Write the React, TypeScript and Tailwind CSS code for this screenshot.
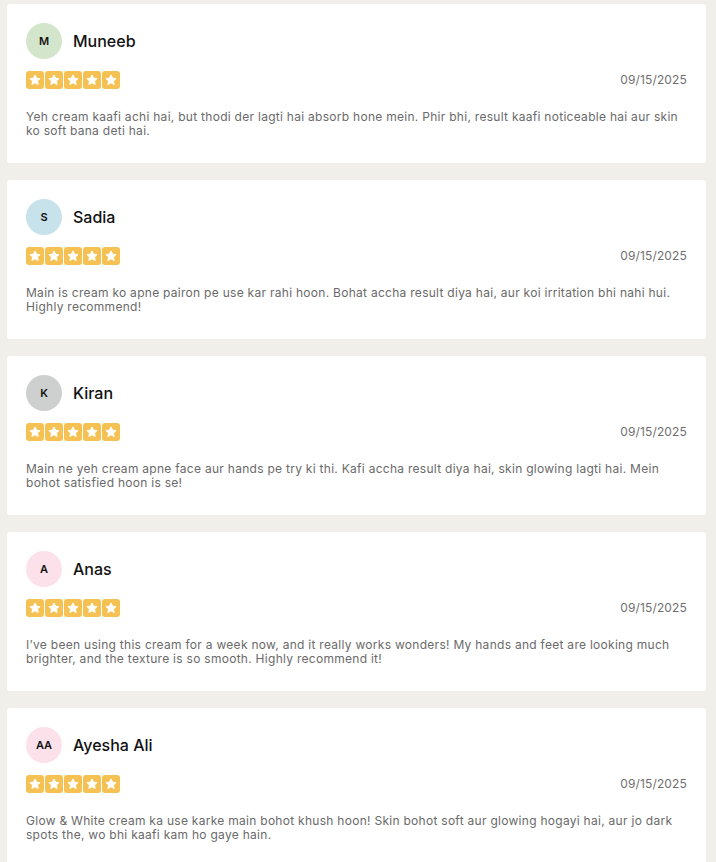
import React from 'react';

interface Review {
  initials: string;
  name: string;
  avatar: string;
  date: string;
  text: string;
}

const REVIEWS: Review[] = [
  {
    initials: 'M',
    name: 'Muneeb',
    avatar: 'bg-[#d3e6cb]',
    date: '09/15/2025',
    text: 'Yeh cream kaafi achi hai, but thodi der lagti hai absorb hone mein. Phir bhi, result kaafi noticeable hai aur skin ko soft bana deti hai.',
  },
  {
    initials: 'S',
    name: 'Sadia',
    avatar: 'bg-[#c7e2eb]',
    date: '09/15/2025',
    text: 'Main is cream ko apne pairon pe use kar rahi hoon. Bohat accha result diya hai, aur koi irritation bhi nahi hui. Highly recommend!',
  },
  {
    initials: 'K',
    name: 'Kiran',
    avatar: 'bg-[#cdd0cf]',
    date: '09/15/2025',
    text: 'Main ne yeh cream apne face aur hands pe try ki thi. Kafi accha result diya hai, skin glowing lagti hai. Mein bohot satisfied hoon is se!',
  },
  {
    initials: 'A',
    name: 'Anas',
    avatar: 'bg-[#fce1ea]',
    date: '09/15/2025',
    text: 'I\u2019ve been using this cream for a week now, and it really works wonders! My hands and feet are looking much brighter, and the texture is so smooth. Highly recommend it!',
  },
  {
    initials: 'AA',
    name: 'Ayesha Ali',
    avatar: 'bg-[#fce1ea]',
    date: '09/15/2025',
    text: 'Glow & White cream ka use karke main bohot khush hoon! Skin bohot soft aur glowing hogayi hai, aur jo dark spots the, wo bhi kaafi kam ho gaye hain.',
  },
];

function StarBox() {
  return (
    <span className="flex h-[18px] w-[18px] items-center justify-center rounded-[3px] bg-[#f4c152]">
      <svg viewBox="0 0 24 24" className="h-[14px] w-[14px]" fill="#ffffff" stroke="#ffffff" strokeWidth="1.5" strokeLinejoin="round">
        <path d="M12 3.2l2.7 5.6 6.1.8-4.5 4.2 1.2 6.1L12 16.9l-5.5 3 1.2-6.1-4.5-4.2 6.1-.8z" />
      </svg>
    </span>
  );
}

function ReviewCard({ review }: { review: Review }) {
  return (
    <div className="flex h-[159px] shrink-0 flex-col rounded-[3px] bg-white px-[19px] pt-[19px]">
      <div className="flex items-center gap-[11px]">
        <div
          className={`flex h-9 w-9 items-center justify-center rounded-full text-[11px] font-semibold text-[#111] ${review.avatar}`}
        >
          {review.initials}
        </div>
        <span className="text-[16px] font-medium text-[#111]">{review.name}</span>
      </div>
      <div className="mt-[12px] flex items-center justify-between">
        <div className="flex gap-[1px]">
          {[0, 1, 2, 3, 4].map((i) => (
            <StarBox key={i} />
          ))}
        </div>
        <span className="text-[12px] tracking-[0.15px] text-[#6f6f6f]">{review.date}</span>
      </div>
      <p className="mt-[21px] text-[12px] leading-[14px] tracking-[0.28px] text-[#6a6a6a]">
        {review.text}
      </p>
    </div>
  );
}

export default function App() {
  return (
    <div
      className="flex h-[862px] flex-col gap-[17px] overflow-hidden bg-[#f1efe9] pl-[7px] pr-[10px] pt-[4px]"
      style={{ fontFamily: 'Inter, "Noto Sans", sans-serif' }}
    >
      {REVIEWS.map((r) => (
        <ReviewCard key={r.name} review={r} />
      ))}
    </div>
  );
}
